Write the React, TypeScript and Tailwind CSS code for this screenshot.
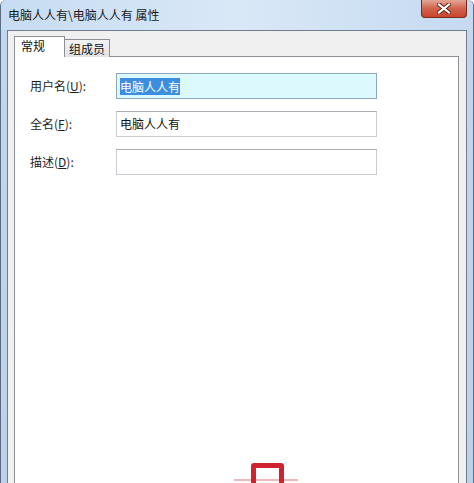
import React from "react";

const font = { fontFamily: '"Noto Sans CJK SC", "Microsoft YaHei", sans-serif' };

function Field({ label, keyChar, value, active }: { label: string; keyChar: string; value?: string; active?: boolean }) {
  return (
    <div className="flex items-center h-[26px]">
      <div className="w-[86px] text-[12px] text-[#1e1e1e]">
        {label}(<span className="underline">{keyChar}</span>):
      </div>
      <div
        className={
          active
            ? "w-[261px] h-[26px] flex items-center pl-[3px] border border-[#8fa7bd] bg-[#dcfafd]"
            : "w-[261px] h-[26px] flex items-center pl-[3px] border border-[#c9ccd1] border-t-[#a9adb3] bg-white"
        }
      >
        {value && (
          <span className={active ? "bg-[#3d8ede] text-white leading-[17px] text-[12px]" : "text-[#111] text-[12px]"}>
            {value}
          </span>
        )}
      </div>
    </div>
  );
}

export default function App() {
  return (
    <div
      className="relative w-[474px] h-[483px] overflow-hidden flex flex-col bg-gradient-to-b from-[#c3d7ee] to-[#bcd2ea] border-l border-r border-[#5b6c82] rounded-tl-[6px] rounded-tr-[6px]"
      style={font}
    >
      {/* title bar */}
      <div className="relative h-[30px] flex items-center pl-[7px] bg-gradient-to-r from-[#c7dcf2] via-[#d9e8f7] to-[#c5daf0]">
        <span className="text-[12px] text-[#1b1b1b]">电脑人人有\电脑人人有 属性</span>
        <div className="absolute right-[6px] top-0 w-[46px] h-[18px] rounded-b-[4px] border border-t-0 border-[#7a2a1e] bg-gradient-to-b from-[#e3a696] via-[#d0644c] to-[#c8452c] flex items-center justify-center">
          <svg width="14" height="11" viewBox="0 0 14 11">
            <path d="M2 1.5 L12 9.5 M12 1.5 L2 9.5" stroke="#5a1f16" strokeWidth="4" strokeLinecap="square" />
            <path d="M2 1.5 L12 9.5 M12 1.5 L2 9.5" stroke="#ffffff" strokeWidth="2.2" strokeLinecap="square" />
          </svg>
        </div>
      </div>

      {/* client area */}
      <div className="flex-1 mx-[6px] border border-b-0 border-[#6f7d8e] bg-[#f0f0f0] pl-[6px] pr-[7px] pt-[5px] flex flex-col">
        {/* tabs */}
        <div className="flex items-end h-[21px] -mb-px relative z-10">
          <div className="w-[51px] h-[21px] border border-b-0 border-[#8c9096] bg-white pl-[6px] text-[12px] leading-[18px] text-[#111]">
            常规
          </div>
          <div className="w-[45px] h-[18px] border border-l-0 border-b-0 border-[#8c9096] bg-gradient-to-b from-[#f3f3f3] to-[#e3e3e3] pl-[4px] text-[12px] leading-[17px] text-[#111]">
            组成员
          </div>
        </div>
        <div className="flex-1 border border-b-0 border-[#8c9096] bg-white pl-[15px] pt-[16px] flex flex-col gap-[12px]">
          <Field label="用户名" keyChar="U" value="电脑人人有" active />
          <Field label="全名" keyChar="F" value="电脑人人有" />
          <Field label="描述" keyChar="D" />
        </div>
      </div>

      {/* red annotation mark */}
      <div className="absolute left-[233px] top-[479px] w-[64px] h-[2px] bg-[#f3b7bb]" />
      <div className="absolute left-[250px] top-[463px] w-[33px] h-[30px] border-[5px] border-[#cf2330] rounded-t-[3px]" />
    </div>
  );
}
